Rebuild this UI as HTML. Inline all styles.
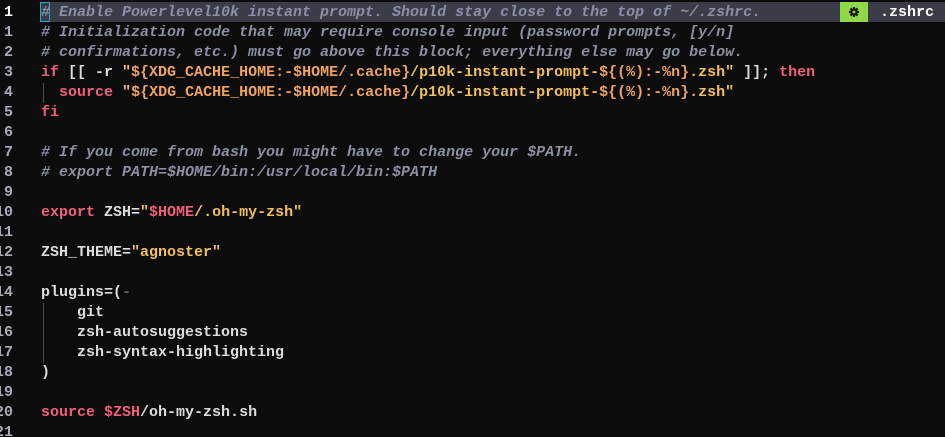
<!DOCTYPE html>
<html><head><meta charset="utf-8"><style>
html,body{margin:0;padding:0;background:#0c0c0c;width:945px;height:437px;overflow:hidden}
body{position:relative;font-family:"Liberation Mono",monospace;font-size:15px;font-weight:bold;color:#dcdcdc}
.row{position:absolute;left:0;height:20px;line-height:20px;white-space:pre;width:945px;margin-top:2px}
.ln{position:absolute;left:-14px;width:27px;text-align:right;color:#a8acb8}
.cur .ln{color:#fff}
.code{position:absolute;left:41px}
.c{color:#8a8fa3;font-style:italic;font-weight:bold}
.k{color:#f25f7d}
.s{color:#f0a35e}
.y{color:#f0c05c}
.bar{position:absolute;left:40px;top:2px;width:905px;height:20px;background:#3a3d48}
.green{position:absolute;left:840px;top:2px;width:28px;height:20px;background:#8fd84a}
.g{position:absolute;left:880px;top:3px;line-height:20px;color:#fff}
.cursor{position:absolute;left:40px;top:2px;width:8px;height:18px;border:1px solid #2aa7c9}
.guide{position:absolute;left:43px;width:1px;background:#4a4d5a}
</style></head><body>
<div class="bar"></div>
<div class="green"><svg width="28" height="20" viewBox="0 0 28 20"><g transform="translate(14,10)" fill="#1a1a1a"><circle r="3.5"/><rect x="-1.1" y="-5" width="2.2" height="10"/><rect x="-5" y="-1.1" width="10" height="2.2"/><rect x="-1.1" y="-5" width="2.2" height="10" transform="rotate(45)"/><rect x="-1.1" y="-5" width="2.2" height="10" transform="rotate(-45)"/></g><circle cx="14" cy="10" r="1.4" fill="#8fd84a"/></svg></div>
<div class="g">.zshrc</div>
<div class="cursor"></div>
<div class="guide" style="top:83px;height:20px"></div>
<div class="guide" style="top:303px;height:60px"></div>

<div class="row cur" style="top:1px"><span class="ln">1</span><span class="code c"># Enable Powerlevel10k instant prompt. Should stay close to the top of ~/.zshrc.</span></div>
<div class="row" style="top:21px"><span class="ln">1</span><span class="code c"># Initialization code that may require console input (password prompts, [y/n]</span></div>
<div class="row" style="top:41px"><span class="ln">2</span><span class="code c"># confirmations, etc.) must go above this block; everything else may go below.</span></div>
<div class="row" style="top:61px"><span class="ln">3</span><span class="code"><span class="k">if</span> [[ -r <span class="y">"</span><span class="s">${XDG_CACHE_HOME:-$HOME/.cache}</span><span class="y">/p10k-instant-prompt-</span><span class="s">${(%):-%n}</span><span class="y">.zsh"</span> ]]; <span class="k">then</span></span></div>
<div class="row" style="top:81px"><span class="ln">4</span><span class="code">  <span class="k">source</span> <span class="y">"</span><span class="s">${XDG_CACHE_HOME:-$HOME/.cache}</span><span class="y">/p10k-instant-prompt-</span><span class="s">${(%):-%n}</span><span class="y">.zsh"</span></span></div>
<div class="row" style="top:101px"><span class="ln">5</span><span class="code k">fi</span></div>
<div class="row" style="top:121px"><span class="ln">6</span></div>
<div class="row" style="top:141px"><span class="ln">7</span><span class="code c"># If you come from bash you might have to change your $PATH.</span></div>
<div class="row" style="top:161px"><span class="ln">8</span><span class="code c"># export PATH=$HOME/bin:/usr/local/bin:$PATH</span></div>
<div class="row" style="top:181px"><span class="ln">9</span></div>
<div class="row" style="top:201px"><span class="ln">10</span><span class="code"><span class="k">export</span> ZSH=<span class="y">"</span><span class="k">$HOME</span><span class="y">/.oh-my-zsh"</span></span></div>
<div class="row" style="top:221px"><span class="ln">11</span></div>
<div class="row" style="top:241px"><span class="ln">12</span><span class="code">ZSH_THEME=<span class="y">"agnoster"</span></span></div>
<div class="row" style="top:261px"><span class="ln">13</span></div>
<div class="row" style="top:281px"><span class="ln">14</span><span class="code">plugins=(<span style="color:#666">-</span></span></div>
<div class="row" style="top:301px"><span class="ln">15</span><span class="code">    git</span></div>
<div class="row" style="top:321px"><span class="ln">16</span><span class="code">    zsh-autosuggestions</span></div>
<div class="row" style="top:341px"><span class="ln">17</span><span class="code">    zsh-syntax-highlighting</span></div>
<div class="row" style="top:361px"><span class="ln">18</span><span class="code">)</span></div>
<div class="row" style="top:381px"><span class="ln">19</span></div>
<div class="row" style="top:401px"><span class="ln">20</span><span class="code"><span class="k">source</span> <span class="k">$ZSH</span>/oh-my-zsh.sh</span></div>
<div class="row" style="top:421px"><span class="ln">21</span></div>
</body></html>
